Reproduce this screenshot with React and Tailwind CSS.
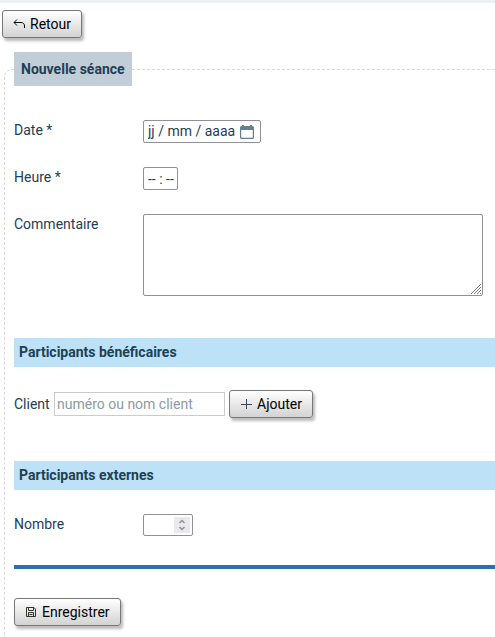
import React, { useState } from 'react';

const ReturnIcon = () => (
    <svg width="12" height="12" viewBox="0 0 12 12" fill="none" stroke="currentColor" strokeWidth="1" aria-hidden="true">
        <path d="M4 1.500 1 4.500l3 3M1 4.500h7c2 0 3.500 1.200 3.500 3.500v2" />
    </svg>
);

const PlusIcon = () => (
    <svg width="12" height="12" viewBox="0 0 12 12" fill="none" stroke="#3a4654" strokeWidth="1" aria-hidden="true">
        <path d="M6.500 1v10M1 6.500h11" />
    </svg>
);

const SaveIcon = () => (
    <svg width="12" height="12" viewBox="0 0 12 12" fill="none" stroke="#33332e" strokeWidth="1" aria-hidden="true">
        <path d="M1.500 1.500h7.500l1.500 1.500v7.500h-9zM3.500 1.500v3h5v-3M3.500 10.500v-4h5v4M4.500 8.500h3" />
    </svg>
);

const CalendarIcon = () => (
    <svg width="14" height="14" viewBox="0 0 14 14" aria-hidden="true">
        <path
            fill="currentColor"
            fillRule="evenodd"
            d="M2 0h2v1h6V0h2v1h.5A1.500 1.500 0 0 1 14 2.500v10a1.500 1.500 0 0 1-1.500 1.500h-11A1.500 1.500 0 0 1 0 12.500v-10A1.500 1.500 0 0 1 1.500 1H2zM1.200 5v7.300c0 .3.200.5.500.5h10.600c.3 0 .5-.2.500-.5V5z"
        />
    </svg>
);

const ActionButton = ({ icon, children, ...props }) => (
    <button
        type="button"
        className="inline-flex h-7 shrink-0 items-center gap-[5px] rounded-[3px] border border-[#777] bg-linear-to-b from-white to-[#d3d3d3] px-[10px] text-black shadow-[2px_3px_3px_#bbb]"
        {...props}
    >
        {icon}
        {children}
    </button>
);

const SectionTitle = ({ children }) => (
    <h2 className="bg-[#bde2f8] px-[5px] py-1 font-bold leading-[21px]">{children}</h2>
);

const Field = ({ id, label, children }) => (
    <div className="flex items-start">
        <label htmlFor={id} className="w-[129px] shrink-0 leading-5">{label}</label>
        {children}
    </div>
);

const App = () => {
    const [date, setDate] = useState('');
    const [heure, setHeure] = useState('');
    const [commentaire, setCommentaire] = useState('');
    const [client, setClient] = useState('');
    const [nombre, setNombre] = useState('');

    const step = (delta) => setNombre(prev => String(Math.max(0, Number(prev) + delta)));

    return (
        <div className="flex min-h-screen flex-col overflow-x-hidden border-t-[3px] border-[#edf1f5] bg-white font-['Roboto',sans-serif] text-[14px] text-[#1d4054]">
            <div className="flex px-[2px] pt-[7px] pb-[14px]">
                <ActionButton icon={<ReturnIcon />}>Retour</ActionButton>
            </div>

            <fieldset className="ml-1 grow rounded-tl-lg border-t border-l border-dashed border-[#d8d8d8] pb-[7px] pl-[9px]">
                <legend className="bg-[#c2ced7] px-[7px] py-[7px] font-bold leading-5">Nouvelle séance</legend>

                <div className="flex flex-col gap-6 pt-[34px] pr-3">
                    <Field id="date" label="Date *">
                        <div className="flex h-[23px] w-[118px] items-center rounded-[2px] border border-[#8f8f9d] pl-1">
                            <input
                                id="date"
                                type="text"
                                className="w-[92px] outline-none placeholder:text-[#1d4054]"
                                placeholder="jj / mm / aaaa"
                                value={date}
                                onChange={(e) => setDate(e.target.value)}
                            />
                            <button type="button" className="text-[#66808c]" aria-label="Ouvrir le calendrier">
                                <CalendarIcon />
                            </button>
                        </div>
                    </Field>
                    <Field id="heure" label="Heure *">
                        <input
                            id="heure"
                            type="text"
                            className="h-[23px] w-[35px] rounded-[2px] border border-[#8f8f9d] pl-1 outline-none placeholder:text-[#1d4054]"
                            placeholder="-- : --"
                            value={heure}
                            onChange={(e) => setHeure(e.target.value)}
                        />
                    </Field>
                    <Field id="commentaire" label="Commentaire">
                        <div className="relative flex min-w-0 grow">
                            <textarea
                                id="commentaire"
                                className="h-[82px] min-w-0 grow resize-none rounded-[2px] border border-[#8f8f9d] p-1 outline-none"
                                value={commentaire}
                                onChange={(e) => setCommentaire(e.target.value)}
                            />
                            <svg className="pointer-events-none absolute right-[2px] bottom-[2px]" width="10" height="10" viewBox="0 0 10 10" fill="none" stroke="#777" strokeWidth="1" aria-hidden="true">
                                <path d="M0 10 10 0M3 10l7-7M6 10l4-4M9 10l1-1" />
                            </svg>
                        </div>
                    </Field>
                </div>

                <div className="pt-[42px]">
                    <SectionTitle>Participants bénéficaires</SectionTitle>
                    <div className="flex items-center gap-1 pt-[23px]">
                        <label htmlFor="client" className="w-9">Client</label>
                        <input
                            id="client"
                            type="text"
                            className="h-6 w-[171px] border border-[#ccc] px-[2px] outline-none placeholder:text-[#8b9ba5]"
                            placeholder="numéro ou nom client"
                            value={client}
                            onChange={(e) => setClient(e.target.value)}
                        />
                        <ActionButton icon={<PlusIcon />}>Ajouter</ActionButton>
                    </div>
                </div>

                <div className="pt-[43px]">
                    <SectionTitle>Participants externes</SectionTitle>
                    <div className="pt-6">
                        <Field id="nombre" label="Nombre">
                            <div className="flex h-[22px] w-[50px] rounded-[2px] border border-[#8f8f9d] p-[2px]">
                                <input
                                    id="nombre"
                                    type="text"
                                    inputMode="numeric"
                                    className="min-w-0 grow outline-none"
                                    value={nombre}
                                    onChange={(e) => setNombre(e.target.value)}
                                />
                                <div className="flex w-4 shrink-0 flex-col bg-[#e9e9ed] text-[#8f8f9d]">
                                    <button type="button" className="flex h-2 items-end justify-center pb-px" aria-label="Augmenter" onClick={() => step(1)}>
                                        <svg width="8" height="5" viewBox="0 0 8 5" fill="none" stroke="currentColor" strokeWidth="1.5">
                                            <path d="M1.500 4 4 1.500 6.500 4" />
                                        </svg>
                                    </button>
                                    <button type="button" className="flex h-2 items-start justify-center pt-px" aria-label="Diminuer" onClick={() => step(-1)}>
                                        <svg width="8" height="5" viewBox="0 0 8 5" fill="none" stroke="currentColor" strokeWidth="1.5">
                                            <path d="M1.500 1 4 3.500 6.500 1" />
                                        </svg>
                                    </button>
                                </div>
                            </div>
                        </Field>
                    </div>
                </div>

                <hr className="mt-[29px] mb-[29px] border-t-4 border-[#2a6fb0]" />

                <ActionButton icon={<SaveIcon />}>Enregistrer</ActionButton>
            </fieldset>
        </div>
    );
};

export default App;
